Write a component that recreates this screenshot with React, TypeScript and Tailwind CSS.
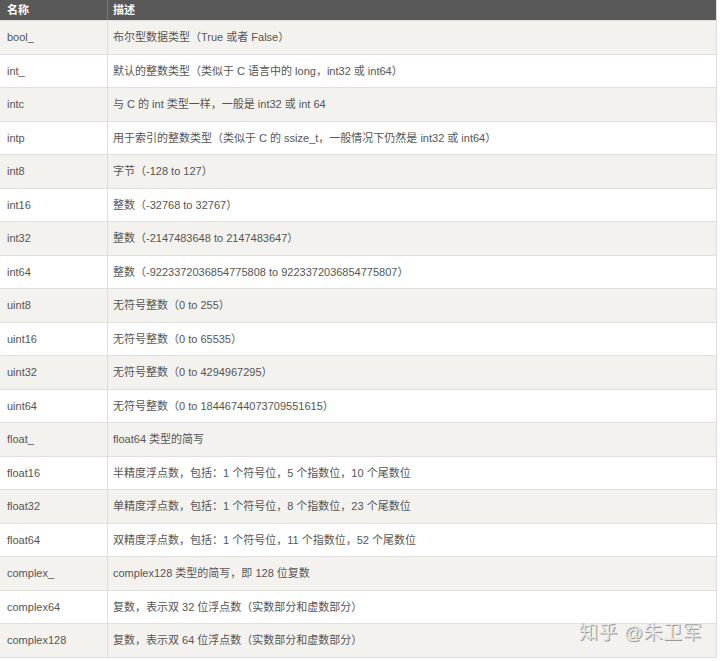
const rows: [string, string][] = [
  ["bool_", "布尔型数据类型（True 或者 False）"],
  ["int_", "默认的整数类型（类似于 C 语言中的 long，int32 或 int64）"],
  ["intc", "与 C 的 int 类型一样，一般是 int32 或 int 64"],
  ["intp", "用于索引的整数类型（类似于 C 的 ssize_t，一般情况下仍然是 int32 或 int64）"],
  ["int8", "字节（-128 to 127）"],
  ["int16", "整数（-32768 to 32767）"],
  ["int32", "整数（-2147483648 to 2147483647）"],
  ["int64", "整数（-9223372036854775808 to 9223372036854775807）"],
  ["uint8", "无符号整数（0 to 255）"],
  ["uint16", "无符号整数（0 to 65535）"],
  ["uint32", "无符号整数（0 to 4294967295）"],
  ["uint64", "无符号整数（0 to 18446744073709551615）"],
  ["float_", "float64 类型的简写"],
  ["float16", "半精度浮点数，包括：1 个符号位，5 个指数位，10 个尾数位"],
  ["float32", "单精度浮点数，包括：1 个符号位，8 个指数位，23 个尾数位"],
  ["float64", "双精度浮点数，包括：1 个符号位，11 个指数位，52 个尾数位"],
  ["complex_", "complex128 类型的简写，即 128 位复数"],
  ["complex64", "复数，表示双 32 位浮点数（实数部分和虚数部分）"],
  ["complex128", "复数，表示双 64 位浮点数（实数部分和虚数部分）"],
];

export default function App() {
  return (
    <div
      className="relative w-[720px] h-[661px] bg-white text-[11px] text-[#555]"
      style={{ fontFamily: '"Liberation Sans", "Noto Sans CJK SC", sans-serif' }}
    >
      <div className="w-[717px] border-r border-b border-[#ddd]">
        <div className="flex h-[20px] bg-[#595959] text-white font-bold items-center">
          <div className="w-[108px] pl-[7px] border-r border-[#777] h-full flex items-center">名称</div>
          <div className="pl-[5px]">描述</div>
        </div>
        {rows.map(([n, d], i) => (
          <div
            key={n}
            className={`flex h-[33.5px] items-center border-t border-[#e2e0dd] ${i % 2 === 0 ? "bg-[#f4f2ef]" : "bg-white"}`}
          >
            <div className="w-[108px] pl-[7px] h-full flex items-center border-r border-[#ddd]">{n}</div>
            <div className="pl-[5px]">{d}</div>
          </div>
        ))}
      </div>
      <div className="absolute right-[18px] bottom-[14px] text-[19px] text-[#e8e6e3] tracking-wide" style={{ textShadow: "1px 1px 0 #999" }}>
        知乎 @朱卫军
      </div>
    </div>
  );
}
